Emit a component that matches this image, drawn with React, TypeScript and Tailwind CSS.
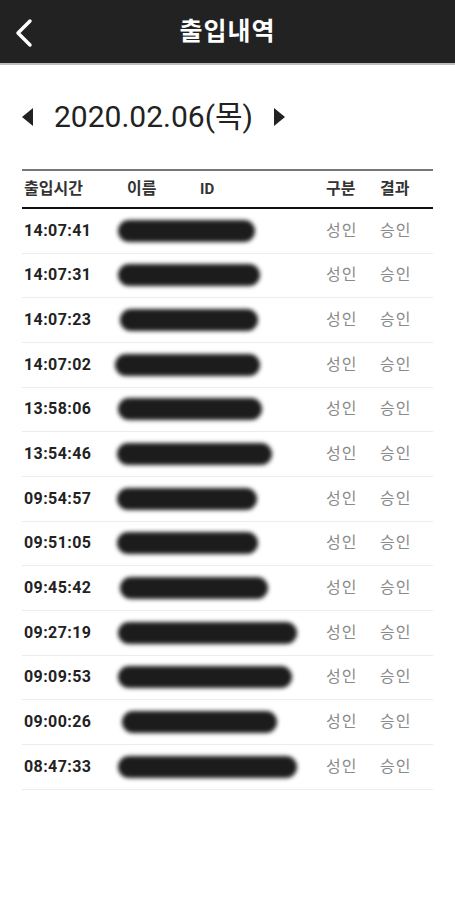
const rows: { time: string; w: number; x: number }[] = [
  { time: "14:07:41", x: 118, w: 137 },
  { time: "14:07:31", x: 118, w: 142 },
  { time: "14:07:23", x: 120, w: 138 },
  { time: "14:07:02", x: 115, w: 145 },
  { time: "13:58:06", x: 118, w: 144 },
  { time: "13:54:46", x: 117, w: 155 },
  { time: "09:54:57", x: 117, w: 140 },
  { time: "09:51:05", x: 117, w: 141 },
  { time: "09:45:42", x: 120, w: 148 },
  { time: "09:27:19", x: 118, w: 179 },
  { time: "09:09:53", x: 118, w: 174 },
  { time: "09:00:26", x: 122, w: 155 },
  { time: "08:47:33", x: 118, w: 179 }
];

const font = { fontFamily: "Roboto, 'Noto Sans CJK KR', sans-serif" };

export default function App() {
  return (
    <div className="w-[455px] h-[900px] bg-white" style={font}>
      <header className="h-[65px] bg-[#222222] border-b-2 border-[#bdbdbd] flex items-center relative">
        <svg className="absolute left-[12px] top-[17px]" width="24" height="32" viewBox="0 0 24 32">
          <path d="M18 4 L6 16 L18 28" fill="none" stroke="white" strokeWidth="3.5" strokeLinecap="round" strokeLinejoin="round" />
        </svg>
        <h1 className="w-full text-center text-white text-[25px] font-bold tracking-[1px]">출입내역</h1>
      </header>

      <div className="flex items-center h-[40px] mt-[32px] pl-[22px]">
        <svg width="12" height="18" viewBox="0 0 12 18">
          <path d="M11 0 L0 9 L11 18 Z" fill="#222" />
        </svg>
        <span className="ml-[20px] text-[30px] text-[#222] leading-none">2020.02.06(목)</span>
        <svg className="ml-[20px]" width="12" height="18" viewBox="0 0 12 18">
          <path d="M1 0 L12 9 L1 18 Z" fill="#222" />
        </svg>
      </div>

      <div className="mx-[22px] mt-[32px]">
        <div className="border-t-2 border-[#777] border-b-2 border-b-[#111] h-[40px] flex items-center text-[16px] font-bold text-[#333]">
          <span className="w-[105px] pl-[2px]">출입시간</span>
          <span className="w-[73px]">이름</span>
          <span className="w-[126px] text-[15px]">ID</span>
          <span className="w-[54px]">구분</span>
          <span>결과</span>
        </div>
        {rows.map((r) => (
          <div key={r.time} className="h-[44.67px] border-b border-[#ececec] flex items-center">
            <span className="w-[96px] pl-[2px] text-[16px] font-bold text-[#222] tracking-[0.4px]">{r.time}</span>
            <div className="w-[208px] relative h-[22px]">
              <div
                className="absolute top-0 h-[22px] rounded-full bg-[#1c1c1c] blur-[2px]"
                style={{ left: r.x - 118, width: r.w }}
              />
            </div>
            <span className="w-[54px] text-[16px] text-[#8a8a8a] tracking-[1px]">성인</span>
            <span className="text-[16px] text-[#8a8a8a] tracking-[1px]">승인</span>
          </div>
        ))}
      </div>
    </div>
  );
}
